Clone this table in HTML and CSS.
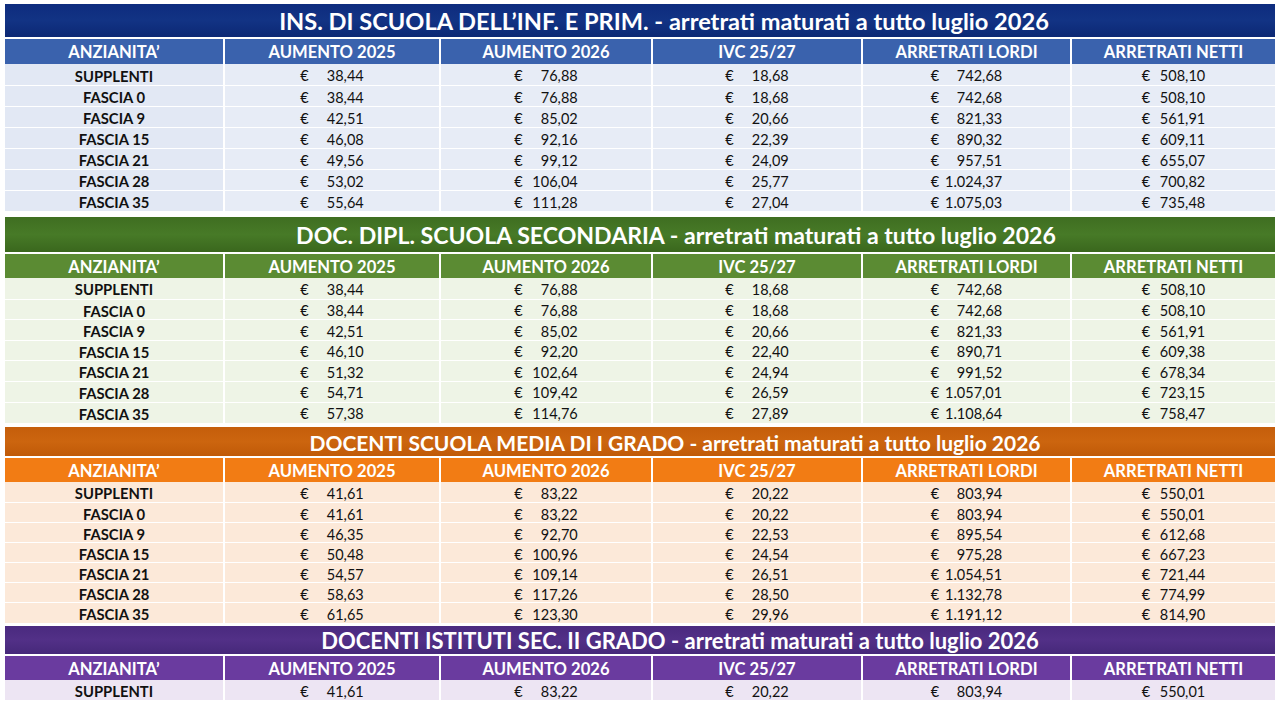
FILE: index.html
```html
<!DOCTYPE html>
<html lang="it">
<head>
<meta charset="utf-8">
<title>Arretrati maturati a tutto luglio 2026</title>
<link rel="stylesheet" href="styles.css">
</head>
<body>
<div class="page">

<section class="sec blue s1">
  <div class="title">INS. DI SCUOLA DELL’INF. E PRIM. - arretrati maturati a tutto luglio 2026</div>
  <div class="grid head">
    <div>ANZIANITA’</div><div>AUMENTO 2025</div><div>AUMENTO 2026</div><div>IVC 25/27</div><div>ARRETRATI LORDI</div><div>ARRETRATI NETTI</div>
  </div>
  <div class="grid row"><div class="lab">SUPPLENTI</div><div class="v"><i>€</i><b>38,44</b></div><div class="v"><i>€</i><b>76,88</b></div><div class="v"><i>€</i><b>18,68</b></div><div class="v"><i>€</i><b>742,68</b></div><div class="v"><i>€</i><b>508,10</b></div></div>
  <div class="grid row"><div class="lab">FASCIA 0</div><div class="v"><i>€</i><b>38,44</b></div><div class="v"><i>€</i><b>76,88</b></div><div class="v"><i>€</i><b>18,68</b></div><div class="v"><i>€</i><b>742,68</b></div><div class="v"><i>€</i><b>508,10</b></div></div>
  <div class="grid row"><div class="lab">FASCIA 9</div><div class="v"><i>€</i><b>42,51</b></div><div class="v"><i>€</i><b>85,02</b></div><div class="v"><i>€</i><b>20,66</b></div><div class="v"><i>€</i><b>821,33</b></div><div class="v"><i>€</i><b>561,91</b></div></div>
  <div class="grid row"><div class="lab">FASCIA 15</div><div class="v"><i>€</i><b>46,08</b></div><div class="v"><i>€</i><b>92,16</b></div><div class="v"><i>€</i><b>22,39</b></div><div class="v"><i>€</i><b>890,32</b></div><div class="v"><i>€</i><b>609,11</b></div></div>
  <div class="grid row"><div class="lab">FASCIA 21</div><div class="v"><i>€</i><b>49,56</b></div><div class="v"><i>€</i><b>99,12</b></div><div class="v"><i>€</i><b>24,09</b></div><div class="v"><i>€</i><b>957,51</b></div><div class="v"><i>€</i><b>655,07</b></div></div>
  <div class="grid row"><div class="lab">FASCIA 28</div><div class="v"><i>€</i><b>53,02</b></div><div class="v"><i>€</i><b>106,04</b></div><div class="v"><i>€</i><b>25,77</b></div><div class="v"><i>€</i><b>1.024,37</b></div><div class="v"><i>€</i><b>700,82</b></div></div>
  <div class="grid row"><div class="lab">FASCIA 35</div><div class="v"><i>€</i><b>55,64</b></div><div class="v"><i>€</i><b>111,28</b></div><div class="v"><i>€</i><b>27,04</b></div><div class="v"><i>€</i><b>1.075,03</b></div><div class="v"><i>€</i><b>735,48</b></div></div>
</section>

<section class="sec green s2">
  <div class="title">DOC. DIPL. SCUOLA SECONDARIA - arretrati maturati a tutto luglio 2026</div>
  <div class="grid head">
    <div>ANZIANITA’</div><div>AUMENTO 2025</div><div>AUMENTO 2026</div><div>IVC 25/27</div><div>ARRETRATI LORDI</div><div>ARRETRATI NETTI</div>
  </div>
  <div class="grid row"><div class="lab">SUPPLENTI</div><div class="v"><i>€</i><b>38,44</b></div><div class="v"><i>€</i><b>76,88</b></div><div class="v"><i>€</i><b>18,68</b></div><div class="v"><i>€</i><b>742,68</b></div><div class="v"><i>€</i><b>508,10</b></div></div>
  <div class="grid row"><div class="lab">FASCIA 0</div><div class="v"><i>€</i><b>38,44</b></div><div class="v"><i>€</i><b>76,88</b></div><div class="v"><i>€</i><b>18,68</b></div><div class="v"><i>€</i><b>742,68</b></div><div class="v"><i>€</i><b>508,10</b></div></div>
  <div class="grid row"><div class="lab">FASCIA 9</div><div class="v"><i>€</i><b>42,51</b></div><div class="v"><i>€</i><b>85,02</b></div><div class="v"><i>€</i><b>20,66</b></div><div class="v"><i>€</i><b>821,33</b></div><div class="v"><i>€</i><b>561,91</b></div></div>
  <div class="grid row"><div class="lab">FASCIA 15</div><div class="v"><i>€</i><b>46,10</b></div><div class="v"><i>€</i><b>92,20</b></div><div class="v"><i>€</i><b>22,40</b></div><div class="v"><i>€</i><b>890,71</b></div><div class="v"><i>€</i><b>609,38</b></div></div>
  <div class="grid row"><div class="lab">FASCIA 21</div><div class="v"><i>€</i><b>51,32</b></div><div class="v"><i>€</i><b>102,64</b></div><div class="v"><i>€</i><b>24,94</b></div><div class="v"><i>€</i><b>991,52</b></div><div class="v"><i>€</i><b>678,34</b></div></div>
  <div class="grid row"><div class="lab">FASCIA 28</div><div class="v"><i>€</i><b>54,71</b></div><div class="v"><i>€</i><b>109,42</b></div><div class="v"><i>€</i><b>26,59</b></div><div class="v"><i>€</i><b>1.057,01</b></div><div class="v"><i>€</i><b>723,15</b></div></div>
  <div class="grid row"><div class="lab">FASCIA 35</div><div class="v"><i>€</i><b>57,38</b></div><div class="v"><i>€</i><b>114,76</b></div><div class="v"><i>€</i><b>27,89</b></div><div class="v"><i>€</i><b>1.108,64</b></div><div class="v"><i>€</i><b>758,47</b></div></div>
</section>

<section class="sec orange s3">
  <div class="title">DOCENTI SCUOLA MEDIA DI I GRADO - arretrati maturati a tutto luglio 2026</div>
  <div class="grid head">
    <div>ANZIANITA’</div><div>AUMENTO 2025</div><div>AUMENTO 2026</div><div>IVC 25/27</div><div>ARRETRATI LORDI</div><div>ARRETRATI NETTI</div>
  </div>
  <div class="grid row"><div class="lab">SUPPLENTI</div><div class="v"><i>€</i><b>41,61</b></div><div class="v"><i>€</i><b>83,22</b></div><div class="v"><i>€</i><b>20,22</b></div><div class="v"><i>€</i><b>803,94</b></div><div class="v"><i>€</i><b>550,01</b></div></div>
  <div class="grid row"><div class="lab">FASCIA 0</div><div class="v"><i>€</i><b>41,61</b></div><div class="v"><i>€</i><b>83,22</b></div><div class="v"><i>€</i><b>20,22</b></div><div class="v"><i>€</i><b>803,94</b></div><div class="v"><i>€</i><b>550,01</b></div></div>
  <div class="grid row"><div class="lab">FASCIA 9</div><div class="v"><i>€</i><b>46,35</b></div><div class="v"><i>€</i><b>92,70</b></div><div class="v"><i>€</i><b>22,53</b></div><div class="v"><i>€</i><b>895,54</b></div><div class="v"><i>€</i><b>612,68</b></div></div>
  <div class="grid row"><div class="lab">FASCIA 15</div><div class="v"><i>€</i><b>50,48</b></div><div class="v"><i>€</i><b>100,96</b></div><div class="v"><i>€</i><b>24,54</b></div><div class="v"><i>€</i><b>975,28</b></div><div class="v"><i>€</i><b>667,23</b></div></div>
  <div class="grid row"><div class="lab">FASCIA 21</div><div class="v"><i>€</i><b>54,57</b></div><div class="v"><i>€</i><b>109,14</b></div><div class="v"><i>€</i><b>26,51</b></div><div class="v"><i>€</i><b>1.054,51</b></div><div class="v"><i>€</i><b>721,44</b></div></div>
  <div class="grid row"><div class="lab">FASCIA 28</div><div class="v"><i>€</i><b>58,63</b></div><div class="v"><i>€</i><b>117,26</b></div><div class="v"><i>€</i><b>28,50</b></div><div class="v"><i>€</i><b>1.132,78</b></div><div class="v"><i>€</i><b>774,99</b></div></div>
  <div class="grid row"><div class="lab">FASCIA 35</div><div class="v"><i>€</i><b>61,65</b></div><div class="v"><i>€</i><b>123,30</b></div><div class="v"><i>€</i><b>29,96</b></div><div class="v"><i>€</i><b>1.191,12</b></div><div class="v"><i>€</i><b>814,90</b></div></div>
</section>

<section class="sec purple s4">
  <div class="title">DOCENTI ISTITUTI SEC. II GRADO - arretrati maturati a tutto luglio 2026</div>
  <div class="grid head">
    <div>ANZIANITA’</div><div>AUMENTO 2025</div><div>AUMENTO 2026</div><div>IVC 25/27</div><div>ARRETRATI LORDI</div><div>ARRETRATI NETTI</div>
  </div>
  <div class="grid row"><div class="lab">SUPPLENTI</div><div class="v"><i>€</i><b>41,61</b></div><div class="v"><i>€</i><b>83,22</b></div><div class="v"><i>€</i><b>20,22</b></div><div class="v"><i>€</i><b>803,94</b></div><div class="v"><i>€</i><b>550,01</b></div></div>
</section>

</div>
</body>
</html>
```

FILE: styles.css
```css
html, body {
  margin: 0;
  padding: 0;
  background: #ffffff;
  overflow: hidden;
}
.page {
  width: 1270px;
  padding: 4px 5px 0 5px;
  font-family: Lato, "Liberation Sans", sans-serif;
  color: #111;
}
.sec {
  display: flex;
  flex-direction: column;
}
.s1 { --th: 33px; --hh: 25px; --rh: 21px; --tf: 23.6px; --tp: 48px; margin-bottom: 6px; }
.s2 { --th: 35px; --hh: 24px; --rh: 20.6px; --tf: 23.1px; --tp: 72px; margin-bottom: 5px; }
.s3 { --th: 29px; --hh: 24px; --rh: 20px; --tf: 21px; --tp: 70px; margin-bottom: 4px; }
.s4 { --th: 28px; --hh: 24px; --rh: 20px; --tf: 22px; --tp: 80px; }

.title {
  height: var(--th);
  display: flex;
  align-items: center;
  justify-content: center;
  color: #fff;
  font-weight: 700;
  font-size: var(--tf);
  margin-bottom: 2px;
  padding-top: 1px;
  padding-left: var(--tp);
  box-sizing: border-box;
  white-space: nowrap;
}
.grid {
  display: grid;
  grid-template-columns: 218px 214px 210px 208px 207px 203px;
  column-gap: 2px;
}
.head {
  height: var(--hh);
  color: #fff;
  font-weight: 700;
  font-size: 16.6px;
}
.head > div {
  display: flex;
  align-items: center;
  justify-content: center;
  padding-top: 1px;
}
.row {
  height: var(--rh);
  font-size: 14.5px;
  border-top: 1px solid #fff;
  box-sizing: border-box;
}
.head + .row { border-top: 0; }
.row > div {
  display: flex;
  align-items: center;
  justify-content: center;
  padding-top: 2px;
}
.lab { font-weight: 700; font-size: 14.8px; }
.v i { font-style: normal; margin-right: 5px; }
.v b { font-weight: 400; display: inline-block; text-align: right; width: 50px; }
.v:nth-child(5) b { width: 58px; }

.blue .title { background: linear-gradient(180deg, #0e2c7e, #123384 50%, #0c2874); }
.blue .head > div { background: #3a62ad; }
.blue .row > div { background: #e7ecf6; }
.blue .row > div.lab { background: #e2e8f4; }

.green .title { background: linear-gradient(180deg, #3f6e21, #477a27 50%, #3a671d); }
.green .head > div { background: #5b8b33; }
.green .row > div { background: #eef4e6; }

.orange .title { background: linear-gradient(180deg, #c55e0b, #cc650f 50%, #c05a08); }
.orange .head > div { background: #f27c14; }
.orange .row > div { background: #fce9d9; }

.purple .title { background: linear-gradient(180deg, #4a2a7f, #523087 50%, #46287a); }
.purple .head > div { background: #6a3b9f; }
.purple .row > div { background: #ede5f3; }
```
